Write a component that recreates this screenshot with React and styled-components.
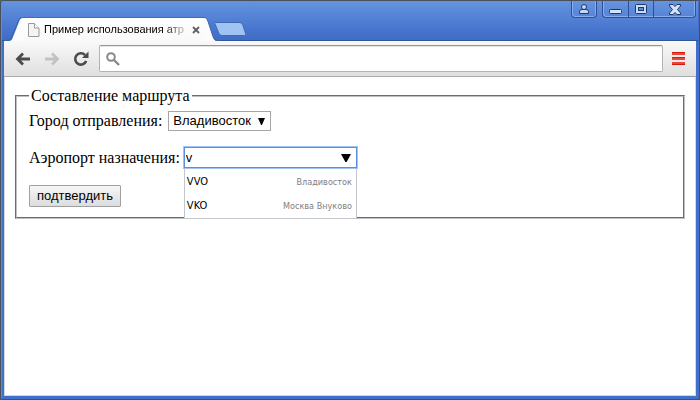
import React from "react";
import styled, { createGlobalStyle } from "styled-components";

const Global = createGlobalStyle`
  *, *::before, *::after { box-sizing: border-box; }
  html { background: #4a4f58; }
  body { margin: 0; }
`;

const Window = styled.div`
  display: flex;
  flex-direction: column;
  min-height: 100vh;
  padding: 0 4px 4px;
  border-radius: 3px;
  background: #3f70cb;
  box-shadow: inset 0 0 0 1px #4b4f57, inset 2px 0 0 0 #5d8fe0, inset 0 2px 0 0 #6f9de6;
`;

const TitleBar = styled.header`
  display: flex;
  justify-content: space-between;
  height: 41px;
  margin: 0 -2px;
  padding: 0 2px;
  border-top: 1px solid #4b4f57;
  background: linear-gradient(#6594df, #4673cc 75%, #3f6cc4);
  box-shadow: inset 0 -1px 0 #2f559f;
`;

const TabStrip = styled.div`
  display: flex;
  align-items: flex-end;
`;

const TabEdge = styled.svg`
  display: block;
  flex: none;
  height: 24px;
  width: ${(p) => p.$width}px;
`;

const Tab = styled.div`
  display: flex;
  align-items: center;
  height: 24px;
  padding-left: 4px;
  border-top: 1px solid #416bb8;
  background: linear-gradient(#ffffff, #f9f9f9);
`;

const TabTitle = styled.span`
  margin: 0 4px 2px;
  white-space: nowrap;
  font: 11px/16px "Liberation Sans", Arial, sans-serif;
  color: transparent;
  background: linear-gradient(90deg, #000 86%, #aaa 98%);
  background-clip: text;
`;

const PlainButton = styled.button`
  display: flex;
  align-items: center;
  justify-content: center;
  flex: none;
  width: ${(p) => p.$width}px;
  height: ${(p) => p.$height}px;
  padding: 0;
  border: 0;
  background: none;
`;

const NewTab = styled(PlainButton)`
  margin: 0 0 4px -6px;
`;

const Controls = styled.div`
  display: flex;
  gap: 5px;
`;

const ControlGroup = styled.div`
  display: flex;
  height: 17px;
  border: 1px solid #304f91;
  border-top: 0;
  border-radius: 0 0 4px 4px;
  background: linear-gradient(#6594df, #5784d6);
  box-shadow: inset 1px -1px 0 #86aeea, inset -1px 0 0 #86aeea;
`;

const Control = styled(PlainButton)`
  & + & { border-left: 1px solid #304f91; }
`;

const Toolbar = styled.nav`
  display: flex;
  align-items: center;
  height: 36px;
  padding: 0 10px 0 4px;
  border-bottom: 1px solid #aaaaaa;
  background: linear-gradient(#f9f9f9, #dfdfdf);
`;

const NavButton = styled(PlainButton)`
  margin-right: ${(p) => p.$gap || 0}px;
`;

const AddressBar = styled.label`
  display: flex;
  align-items: center;
  flex: 1;
  height: 27px;
  margin-right: 8px;
  padding-left: 6px;
  border: 1px solid #b3b3b3;
  border-top-color: #969696;
  border-radius: 2px;
  background: #fff;
  box-shadow: inset 0 1px 0 #e6e6e6;
`;

const AddressInput = styled.input`
  flex: 1;
  min-width: 0;
  border: 0;
  outline: 0;
  background: none;
`;

const Page = styled.main`
  flex: 1;
  padding: 9px 10px;
  border: 1px solid #d3d6da;
  border-top: 0;
  background: #fff;
  color: #000;
  font: 16px/20px "Liberation Serif", "Times New Roman", serif;
`;

const Group = styled.fieldset`
  margin: 0;
  padding: 5px 12px 10px;
  min-width: 0;
  border: 2px groove #c0c0c0;
`;

const Legend = styled.legend`
  padding: 0 2px;
`;

const Row = styled.div`
  display: flex;
  align-items: center;
  gap: ${(p) => p.$gap}px;
  margin-bottom: ${(p) => p.$after}px;
`;

const SelectBox = styled.div`
  display: grid;
  align-items: center;
  width: 103px;
  & > * { grid-area: 1 / 1; }
  & > svg { justify-self: end; margin-right: 6px; pointer-events: none; }
`;

const Select = styled.select`
  appearance: none;
  width: 100%;
  height: 20px;
  padding: 0 4px;
  border: 1px solid #a6a6a6;
  border-radius: 0;
  background: #fff;
  color: #000;
  font: 13px/18px "Liberation Sans", Arial, sans-serif;
`;

const Combo = styled.div`
  position: relative;
  display: grid;
  align-items: center;
  width: 175px;
  & > input, & > svg { grid-area: 1 / 1; }
  & > svg { justify-self: end; margin-right: 7px; pointer-events: none; }
`;

const ComboInput = styled.input`
  width: 100%;
  height: 23px;
  padding: 0 2px;
  border: 1px solid #a3c3f3;
  outline: 0;
  background: #fff;
  box-shadow: inset 0 0 0 1px #5b8fdc;
  color: #000;
  font: 13px/19px "Liberation Sans", Arial, sans-serif;
`;

const Options = styled.ul`
  position: absolute;
  top: 100%;
  left: 1px;
  right: 1px;
  margin: 0;
  padding: 1px 0 0;
  list-style: none;
  border: 1px solid #c3c7cd;
  border-top: 0;
  background: #fff;
`;

const Option = styled.li`
  display: flex;
  align-items: center;
  justify-content: space-between;
  height: 24px;
  padding: 0 4px 0 2px;
  font: 11px/16px "DejaVu Sans Condensed", "DejaVu Sans", sans-serif;
`;

const Hint = styled.span`
  color: #808080;
  font-size: 9px;
`;

const Submit = styled.button`
  height: 22px;
  padding: 0 7px;
  border: 1px solid #a0a0a0;
  border-radius: 1px;
  background: linear-gradient(#f6f6f6, #dddddd);
  color: #000;
  font: 13px/18px "Liberation Sans", Arial, sans-serif;
`;

const airports = [
  { code: "VVO", city: "Владивосток" },
  { code: "VKO", city: "Москва Внуково" },
];

const Arrow = ({ width, height }) => (
  <svg width={width} height={height} viewBox="0 0 10 8" preserveAspectRatio="none">
    <path d="M0 0h10L5.6 8H4.4z" fill="#000" />
  </svg>
);

export default function App() {
  return (
    <>
      <Global />
      <Window>
        <TitleBar>
          <TabStrip>
            <TabEdge $width={20} viewBox="0 0 20 24">
              <path d="M0 24h4c3 0 4-1 5-4l6-15c1-3 2-4.500 5-4.500V24z" fill="#fcfcfc" />
              <path d="M0 23.500h3c3 0 4-1 5-4l6-15c1-3 2-4 6-4" fill="none" stroke="#3b62ad" />
            </TabEdge>
            <Tab>
              <svg width="12" height="14" viewBox="0 0 12 14">
                <path d="M.5.500h6l4.500 4.500v8.500H.5z" fill="#f4f4f4" stroke="#999" />
                <path d="M6.500.500V5H11" fill="#fff" stroke="#999" />
              </svg>
              <TabTitle>Пример использования атр</TabTitle>
              <PlainButton $width={16} $height={16} aria-label="Закрыть вкладку">
                <svg width="8" height="8" viewBox="0 0 8 8">
                  <path d="M1 1l6 6M7 1L1 7" stroke="#606060" strokeWidth="1.800" />
                </svg>
              </PlainButton>
            </Tab>
            <TabEdge $width={16} viewBox="0 0 16 24">
              <path d="M0 .500c2 0 3 1 4 4l5 15c1 3 2 4.500 4 4.500H0z" fill="#fcfcfc" />
              <path d="M0 .500c2 0 3 1 4 4l5 15c1 3 2 4 5 4h2" fill="none" stroke="#3b62ad" />
            </TabEdge>
            <NewTab $width={32} $height={16} aria-label="Новая вкладка">
              <svg width="32" height="16" viewBox="0 0 32 16">
                <path d="M2 1.500h23c2 0 3 1 4 3l2.500 8c.500 1.500 0 2-1 2H9c-2 0-3-.500-4-2L1 3c-.500-1 0-1.500 1-1.500z" fill="#9fc3f3" stroke="#4168b3" />
              </svg>
            </NewTab>
          </TabStrip>
          <Controls>
            <ControlGroup>
              <Control $width={24} $height={16} aria-label="Профиль">
                <svg width="12" height="12" viewBox="0 0 12 12">
                  <path d="M1.500 10.500V8.500Q1.500 6.500 4 6.500h4q2.500 0 2.500 2v2z" fill="#c3d8f6" stroke="#1f3767" />
                  <circle cx="6" cy="4" r="2.500" fill="#c3d8f6" stroke="#1f3767" />
                </svg>
              </Control>
            </ControlGroup>
            <ControlGroup>
              <Control $width={25} $height={16} aria-label="Свернуть">
                <svg width="13" height="12" viewBox="0 0 13 12">
                  <rect x=".5" y="6.500" width="12" height="4" rx="1" fill="#d5e3f9" stroke="#1f3767" />
                </svg>
              </Control>
              <Control $width={25} $height={16} aria-label="Развернуть">
                <svg width="12" height="10" viewBox="0 0 12 10">
                  <rect x=".5" y=".5" width="11" height="9" rx="1" fill="#c9dcf8" stroke="#1f3767" />
                  <rect x="3.500" y="3.500" width="5" height="3" fill="#5e8cdb" stroke="#1f3767" />
                </svg>
              </Control>
              <Control $width={42} $height={16} aria-label="Закрыть">
                <svg width="12" height="11" viewBox="0 0 12 11">
                  <path d="M.5.500h3.500l2 2 2-2h3.500v1.500L8.500 5.500l3 3.500v1.500H8l-2-2-2 2H.5V9l3-3.500-3-3.500z" fill="#d5e3f9" stroke="#1f3767" />
                </svg>
              </Control>
            </ControlGroup>
          </Controls>
        </TitleBar>
        <Toolbar>
          <NavButton $width={30} $height={28} aria-label="Назад">
            <svg width="16" height="14" viewBox="0 0 16 14">
              <path d="M15 7H2M8 1.500L2.500 7 8 12.500" fill="none" stroke="#4b4b4b" strokeWidth="2.800" />
            </svg>
          </NavButton>
          <NavButton $width={28} $height={28} disabled aria-label="Вперёд">
            <svg width="16" height="14" viewBox="0 0 16 14">
              <path d="M1 7h13M8 1.500L13.500 7 8 12.500" fill="none" stroke="#c2c2c2" strokeWidth="2.800" />
            </svg>
          </NavButton>
          <NavButton $width={30} $height={28} $gap={3} aria-label="Обновить">
            <svg width="16" height="16" viewBox="0 0 16 16">
              <path d="M12 4A5.700 5.700 0 1 0 13.200 10" fill="none" stroke="#4b4b4b" strokeWidth="2.600" />
              <path d="M15.500.500v6.500H9z" fill="#4b4b4b" />
            </svg>
          </NavButton>
          <AddressBar>
            <svg width="14" height="14" viewBox="0 0 14 14">
              <circle cx="5" cy="5" r="3.800" fill="none" stroke="#888" strokeWidth="2" />
              <path d="M8 8l5 5" stroke="#888" strokeWidth="2.400" />
            </svg>
            <AddressInput type="text" aria-label="Адрес" />
          </AddressBar>
          <PlainButton $width={15} $height={28} aria-label="Меню">
            <svg width="13" height="13" viewBox="0 0 13 13">
              <path d="M0 1.500h13M0 6.500h13M0 11.500h13" stroke="#e8483c" strokeWidth="3" />
              <path d="M0 .500h13M0 5.500h13M0 12.500h13" stroke="#d41b12" />
            </svg>
          </PlainButton>
        </Toolbar>
        <Page>
          <Group>
            <Legend>Составление маршрута</Legend>
            <Row $gap={6} $after={15}>
              <label htmlFor="from">Город отправления:</label>
              <SelectBox>
                <Select id="from" defaultValue="vvo">
                  <option value="vvo">Владивосток</option>
                </Select>
                <Arrow width={7} height={7} />
              </SelectBox>
            </Row>
            <Row $gap={3} $after={16}>
              <label htmlFor="to">Аэропорт назначения:</label>
              <Combo>
                <ComboInput id="to" type="text" defaultValue="v" autoComplete="off" />
                <Arrow width={10} height={8} />
                <Options>
                  {airports.map((a) => (
                    <Option key={a.code}>
                      <span>{a.code}</span>
                      <Hint>{a.city}</Hint>
                    </Option>
                  ))}
                </Options>
              </Combo>
            </Row>
            <Submit type="button">подтвердить</Submit>
          </Group>
        </Page>
      </Window>
    </>
  );
}
